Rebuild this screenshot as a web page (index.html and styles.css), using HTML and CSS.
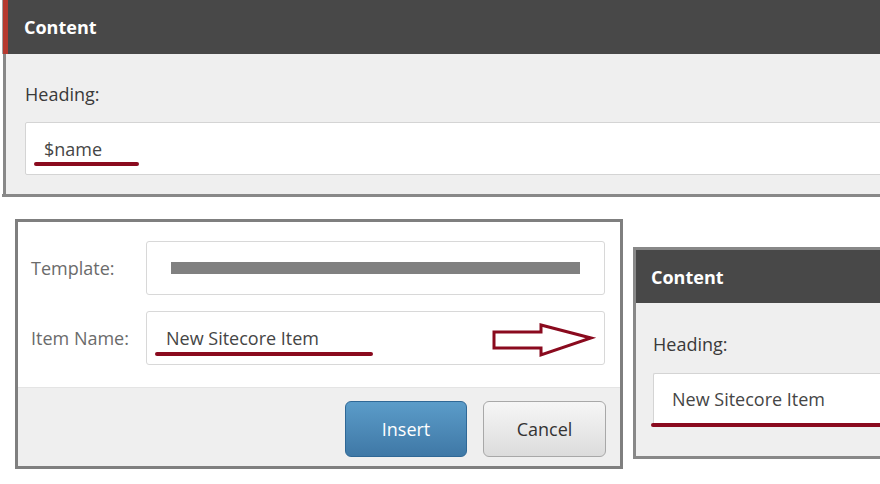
FILE: index.html
```html
<!DOCTYPE html>
<html>
<head>
<meta charset="utf-8">
<link rel="stylesheet" href="styles.css">
</head>
<body>
<div class="top-panel">
  <div class="panel-header top-header">Content</div>
  <div class="top-body">
    <div class="field-label">Heading:</div>
    <div class="field-input">
      <span class="field-text">$name</span>
      <span class="mark mark-name"></span>
    </div>
  </div>
</div>
<div class="lower">
  <div class="dialog">
    <div class="dialog-main">
      <div class="dialog-row">
        <div class="dialog-label">Template:</div>
        <div class="dialog-input">
          <div class="template-bar"></div>
        </div>
      </div>
      <div class="dialog-row">
        <div class="dialog-label">Item Name:</div>
        <div class="dialog-input">
          <span class="field-text">New Sitecore Item</span>
          <span class="mark mark-item"></span>
          <svg class="arrow" width="110" height="50" viewBox="0 0 110 50">
            <polygon points="2,20 49,20 49,13 99,26 49,43 49,36 2,36" fill="none" stroke="#8a0a1e" stroke-width="3" stroke-linejoin="miter"/>
          </svg>
        </div>
      </div>
    </div>
    <div class="dialog-footer">
      <button class="btn btn-primary">Insert</button>
      <button class="btn btn-default">Cancel</button>
    </div>
  </div>
  <div class="side-panel">
    <div class="panel-header side-header">Content</div>
    <div class="side-body">
      <div class="field-label">Heading:</div>
      <div class="field-input side-input">
        <span class="field-text">New Sitecore Item</span>
        <span class="mark mark-side"></span>
      </div>
    </div>
  </div>
</div>
</body>
</html>
```
FILE: styles.css
```css
html, body {
  margin: 0;
  padding: 0;
  background: #ffffff;
  font-family: "Open Sans", "Noto Sans", sans-serif;
  overflow: hidden;
  width: 880px;
  height: 484px;
}

.top-panel {
  margin-left: 2px;
  width: 900px;
  border-bottom: 3px solid #888888;
}

.panel-header {
  background: #484848;
  color: #ffffff;
  font-weight: 700;
  font-size: 18px;
  display: flex;
  align-items: center;
}

.top-header {
  height: 54px;
  padding-left: 22px;
  background: linear-gradient(to right, #a0a0a0 0 1px, #b6392f 1px 6px, #484848 6px);
}

.top-body {
  background: #efefef;
  margin-left: 1px;
  border-left: 3px solid #888888;
  padding: 28px 0 19px 19px;
}

.field-label {
  font-size: 18px;
  color: #3a3a3a;
  line-height: 24px;
  height: 24px;
  margin-bottom: 16px;
}

.field-input {
  position: relative;
  height: 51px;
  background: #ffffff;
  border: 1px solid #d4d4d4;
  border-radius: 2px;
  display: flex;
  align-items: center;
  padding-left: 18px;
}

.field-text {
  font-size: 18px;
  color: #454545;
}

.mark {
  position: absolute;
  height: 4px;
  background: #8a0a1e;
  border-radius: 2px;
}

.mark-name {
  left: 8px;
  top: 39px;
  width: 105px;
}

.lower {
  display: flex;
  align-items: flex-start;
  margin-top: 22px;
}

.dialog {
  flex-shrink: 0;
  margin-left: 15px;
  width: 602px;
  border: 3px solid #7f7f7f;
  background: #efefef;
}

.dialog-main {
  background: #ffffff;
  padding: 19px 15px 22px 0;
  border-bottom: 1px solid #e4e4e4;
  display: flex;
  flex-direction: column;
  gap: 16px;
}

.dialog-row {
  display: flex;
  align-items: center;
}

.dialog-label {
  width: 128px;
  flex-shrink: 0;
  padding-left: 13px;
  box-sizing: border-box;
  font-size: 18px;
  color: #6b6b6b;
}

.dialog-input {
  position: relative;
  flex: 1;
  height: 52px;
  border: 1px solid #d8d8d8;
  border-radius: 3px;
  background: #ffffff;
  display: flex;
  align-items: center;
  padding-left: 19px;
}

.template-bar {
  width: 409px;
  height: 12px;
  margin-left: 5px;
  background: #808080;
}

.mark-item {
  left: 8px;
  top: 40px;
  width: 218px;
}

.arrow {
  position: absolute;
  left: 345px;
  top: 0;
}

.dialog-footer {
  display: flex;
  justify-content: flex-end;
  gap: 16px;
  padding: 13px 14px 9px 0;
}

.btn {
  font-family: "Open Sans", "Noto Sans", sans-serif;
  font-size: 18px;
  height: 56px;
  border-radius: 6px;
  padding: 0;
  cursor: pointer;
}

.btn-primary {
  width: 122px;
  color: #ffffff;
  background: linear-gradient(#5b9cc9, #3f78a6);
  border: 1px solid #2f6896;
}

.btn-default {
  width: 123px;
  color: #333333;
  background: linear-gradient(#f6f6f6, #dcdcdc);
  border: 1px solid #a8a8a8;
}

.side-panel {
  margin-left: 10px;
  margin-top: 28px;
  flex: 1;
  min-width: 260px;
  border: 3px solid #888888;
  border-right: none;
  background: #efefef;
}

.side-header {
  height: 53px;
  padding-left: 15px;
}

.side-body {
  padding: 29px 0 31px 17px;
}

.side-body .field-label {
  margin-bottom: 17px;
}

.side-input {
  border-right: none;
  height: 50px;
  border-radius: 2px 0 0 2px;
}

.mark-side {
  left: -3px;
  top: 49px;
  width: 260px;
}
```
